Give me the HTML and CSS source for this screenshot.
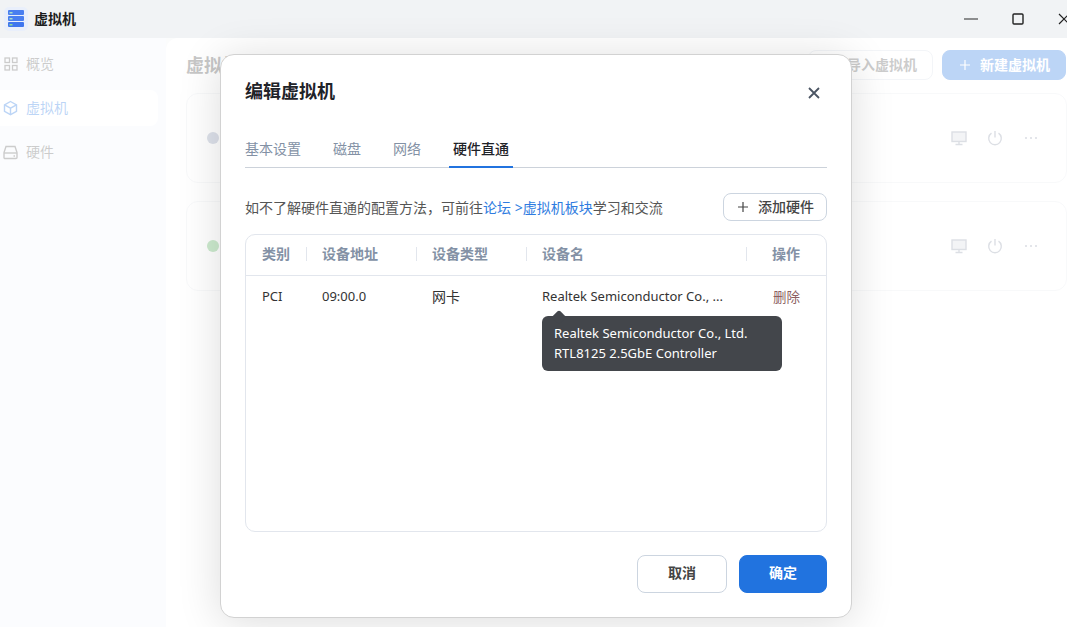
FILE: index.html

```html
<!DOCTYPE html>
<html lang="zh-CN">
<head>
  <meta charset="UTF-8">
  <title>虚拟机</title>
  <link rel="stylesheet" href="styles.css">
</head>
<body>
  <div class="app">
    <header class="titlebar">
      <svg class="logo" width="26" height="28" viewBox="0 0 26 28">
        <rect x="2" y="4" width="24" height="24" rx="5" fill="#e9effb"/>
        <rect x="6" y="7" width="16" height="5" rx="1" fill="#4a7ff0"/>
        <rect x="6" y="13" width="16" height="5" rx="1" fill="#4a7ff0"/>
        <rect x="6" y="19" width="16" height="5" rx="1" fill="#3f76ee"/>
        <rect x="7.500" y="9" width="3" height="1.500" fill="#a8e0c8"/>
        <rect x="7.500" y="15" width="3" height="1.500" fill="#a8e0c8"/>
        <rect x="7.500" y="21" width="3" height="1.500" fill="#8fdc9c"/>
      </svg>
      <span class="app-name">虚拟机</span>
      <div class="win-controls">
        <svg class="win-min" width="14" height="14" viewBox="0 0 14 14"><path d="M0 7h14" stroke="#555" stroke-width="1.300"/></svg>
        <svg class="win-max" width="12" height="12" viewBox="0 0 12 12"><rect x="1" y="1" width="10" height="10" rx="1" fill="none" stroke="#222" stroke-width="1.400"/></svg>
        <svg class="win-close" width="12" height="12" viewBox="0 0 12 12"><path d="M1 1l10 10M11 1L1 11" stroke="#222" stroke-width="1.200"/></svg>
      </div>
    </header>

    <div class="content">
      <aside class="sidebar">
        <div class="nav-item">
          <svg width="16" height="16" viewBox="0 0 16 16" fill="none" stroke="currentColor" stroke-width="1.300"><rect x="3" y="2" width="4.500" height="4.500"/><rect x="10.500" y="2" width="4.500" height="4.500"/><rect x="3" y="9.500" width="4.500" height="4.500"/><rect x="10.500" y="9.500" width="4.500" height="4.500"/></svg>
          <span>概览</span>
        </div>
        <div class="nav-item active">
          <svg width="16" height="16" viewBox="0 0 16 16" fill="none" stroke="currentColor" stroke-width="1.400"><path d="M8.500 1.500l6 3.300v6.600l-6 3.300-6-3.300V4.800z"/><path d="M2.500 4.800l6 3.300 6-3.300M8.500 8.100v6.600"/></svg>
          <span>虚拟机</span>
        </div>
        <div class="nav-item">
          <svg width="16" height="16" viewBox="0 0 16 16" fill="none" stroke="currentColor" stroke-width="1.400"><path d="M4 2.500h9l2 6v5a1 1 0 0 1-1 1H3a1 1 0 0 1-1-1v-5z"/><path d="M2 9h13"/><path d="M11.500 12h1.500"/></svg>
          <span>硬件</span>
        </div>
      </aside>

      <main class="main">
        <div class="page-head">
          <h2>虚拟机</h2>
          <div class="page-actions">
            <button class="page-btn">导入虚拟机</button>
            <button class="page-btn primary">
              <svg class="plus" width="10" height="10" viewBox="0 0 10 10"><path d="M5 0v10M0 5h10" stroke="currentColor" stroke-width="1.200"/></svg>新建虚拟机
            </button>
          </div>
        </div>
        <div class="vm-card">
          <span class="dot"></span>
          <div class="vm-actions">
            <svg width="18" height="18" viewBox="0 0 18 18" fill="none" stroke="currentColor" stroke-width="1.400"><rect x="2" y="3" width="14" height="9.500" fill="currentColor" fill-opacity=".35"/><path d="M9 12.500V15M5.500 15.500h7"/></svg>
            <svg width="18" height="18" viewBox="0 0 18 18" fill="none" stroke="currentColor" stroke-width="1.400"><path d="M5.500 4.200a6.300 6.300 0 1 0 7 0M9 2v6.500"/></svg>
            <svg width="18" height="18" viewBox="0 0 18 18" fill="currentColor"><circle cx="4" cy="9" r="1.100"/><circle cx="9" cy="9" r="1.100"/><circle cx="14" cy="9" r="1.100"/></svg>
          </div>
        </div>
        <div class="vm-card">
          <span class="dot on"></span>
          <div class="vm-actions">
            <svg width="18" height="18" viewBox="0 0 18 18" fill="none" stroke="currentColor" stroke-width="1.400"><rect x="2" y="3" width="14" height="9.500" fill="currentColor" fill-opacity=".35"/><path d="M9 12.500V15M5.500 15.500h7"/></svg>
            <svg width="18" height="18" viewBox="0 0 18 18" fill="none" stroke="currentColor" stroke-width="1.400"><path d="M5.500 4.200a6.300 6.300 0 1 0 7 0M9 2v6.500"/></svg>
            <svg width="18" height="18" viewBox="0 0 18 18" fill="currentColor"><circle cx="4" cy="9" r="1.100"/><circle cx="9" cy="9" r="1.100"/><circle cx="14" cy="9" r="1.100"/></svg>
          </div>
        </div>
      </main>

      <div class="mask"></div>
    </div>

    <section class="modal">
      <div class="modal-head">
        <h1>编辑虚拟机</h1>
        <svg class="modal-close" width="12" height="12" viewBox="0 0 12 12"><path d="M1 1l10 10M11 1L1 11" stroke="#4b5563" stroke-width="1.800"/></svg>
      </div>

      <nav class="tabs">
        <a class="tab">基本设置</a>
        <a class="tab">磁盘</a>
        <a class="tab">网络</a>
        <a class="tab active">硬件直通</a>
      </nav>

      <div class="notice">
        <p>如不了解硬件直通的配置方法，可前往<a class="link">论坛 &gt;虚拟机板块</a>学习和交流</p>
        <button class="add-btn">
          <svg class="plus" width="10" height="10" viewBox="0 0 10 10"><path d="M5 0v10M0 5h10" stroke="currentColor" stroke-width="1.200"/></svg>添加硬件
        </button>
      </div>

      <div class="hw-table">
        <div class="hw-row hw-header">
          <div class="hw-cell">类别</div>
          <div class="hw-cell">设备地址</div>
          <div class="hw-cell">设备类型</div>
          <div class="hw-cell">设备名</div>
          <div class="hw-cell op">操作</div>
        </div>
        <div class="hw-row">
          <div class="hw-cell">PCI</div>
          <div class="hw-cell">09:00.0</div>
          <div class="hw-cell type">网卡</div>
          <div class="hw-cell name">
            <span>Realtek Semiconductor Co., ...</span>
            <div class="tooltip">Realtek Semiconductor Co., Ltd.<br>RTL8125 2.5GbE Controller</div>
          </div>
          <div class="hw-cell op"><a class="del">删除</a></div>
        </div>
      </div>

      <div class="modal-foot">
        <button class="btn">取消</button>
        <button class="btn primary">确定</button>
      </div>
    </section>
  </div>
</body>
</html>
```

FILE: styles.css

```css
* {
  box-sizing: border-box;
}

body {
  margin: 0;
  background: #fff;
  font-family: "Noto Sans", "Noto Sans CJK SC", sans-serif;
  color: #333;
}

h1, h2, p {
  margin: 0;
}

button {
  font-family: inherit;
}

.app {
  position: relative;
  width: 1067px;
  height: 627px;
  overflow: hidden;
  display: flex;
  flex-direction: column;
}

/* title bar */
.titlebar {
  height: 38px;
  flex: none;
  display: flex;
  align-items: center;
  background: #f1f3f5;
}

.logo {
  margin: -4px 0 0 2px;
}

.app-name {
  margin: 0 0 3px 6px;
  font-size: 14px;
  font-weight: 700;
  color: #1c1c1c;
}

.win-controls {
  margin-left: auto;
  display: flex;
  align-items: center;
  margin-right: -3px;
}

.win-min {
  margin-right: 34px;
}

.win-max {
  margin-right: 34px;
}

/* page behind the dialog */
.content {
  position: relative;
  flex: 1;
  display: flex;
  background: #f1f3f5;
}

.sidebar {
  width: 166px;
  flex: none;
  padding-top: 8px;
  background: #f2f5fb;
}

.nav-item {
  width: 158px;
  height: 36px;
  margin-bottom: 8px;
  display: flex;
  align-items: center;
  gap: 8px;
  padding-left: 2px;
  border-radius: 0 8px 8px 0;
  font-size: 14px;
  color: #555;
}

.nav-item span {
  padding-bottom: 2px;
}

.nav-item.active {
  background: #fff;
  color: #2173df;
}

.main {
  flex: 1;
  padding: 12px 0 0 20px;
  background: #fff;
  border-radius: 12px 0 0 0;
}

.page-head {
  height: 30px;
  margin-bottom: 13px;
  display: flex;
  align-items: center;
  justify-content: space-between;
}

.page-head h2 {
  padding-bottom: 3px;
  font-size: 18px;
  font-weight: 700;
  color: #444;
}

.page-actions {
  display: flex;
  gap: 9px;
  margin-right: 1px;
}

.page-btn {
  width: 125px;
  height: 30px;
  padding: 0 15px 2px;
  background: #fff;
  border: 1px solid #d5dce6;
  border-radius: 8px;
  font-size: 14px;
  font-weight: 700;
  text-align: right;
  color: #555;
}

.page-btn.primary {
  width: 124px;
  background: #2173df;
  border-color: #2173df;
  color: #fff;
}

.page-btn .plus {
  margin-right: 10px;
}

.vm-card {
  height: 90px;
  margin: 0 0 18px;
  padding: 0 26px 0 20px;
  display: flex;
  align-items: center;
  justify-content: space-between;
  border: 1px solid #e6e9ee;
  border-radius: 12px;
}

.dot {
  width: 12px;
  height: 12px;
  border-radius: 50%;
  background: #8d9bb9;
}

.dot.on {
  background: #54b85a;
}

.vm-actions {
  display: flex;
  gap: 18px;
  color: #8a93a6;
}

.mask {
  position: absolute;
  inset: 0;
  background: rgba(255, 255, 255, 0.7);
}

/* dialog */
.modal {
  position: absolute;
  left: 220px;
  top: 54px;
  width: 632px;
  height: 564px;
  padding: 24px 24px 0;
  display: flex;
  flex-direction: column;
  background: #fff;
  border: 1px solid #d2d2d2;
  border-radius: 14px;
  box-shadow: 0 4px 44px rgba(0, 0, 0, 0.14);
}

.modal-head {
  height: 26px;
  display: flex;
  align-items: center;
  justify-content: space-between;
}

.modal-head h1 {
  padding-bottom: 4px;
  font-size: 18px;
  font-weight: 700;
  color: #1f2329;
}

.modal-close {
  margin: 1px 7px 0 0;
}

.tabs {
  margin-top: 26px;
  height: 37px;
  display: flex;
  gap: 24px;
  border-bottom: 1px solid #ccd2da;
}

.tab {
  padding: 0 4px;
  height: 37px;
  line-height: 36px;
  font-size: 14px;
  color: #8391a5;
}

.tab:first-child {
  margin-left: -4px;
}

.tab.active {
  color: #1f2329;
  font-weight: 500;
  border-bottom: 2px solid #2173df;
}

.notice {
  margin-top: 25px;
  height: 28px;
  display: flex;
  align-items: center;
  justify-content: space-between;
  font-size: 14px;
  color: #555;
}

.notice p {
  padding-bottom: 1px;
}

.link {
  color: #2f7ce0;
}

.add-btn {
  width: 104px;
  height: 28px;
  padding: 0 0 2px 2px;
  background: #fff;
  border: 1px solid #ccd5e0;
  border-radius: 8px;
  font-size: 14px;
  font-weight: 500;
  color: #444;
}

.add-btn .plus {
  margin-right: 10px;
}

.hw-table {
  margin-top: 13px;
  height: 298px;
  border: 1px solid #e2e6ed;
  border-radius: 10px;
}

.hw-row {
  display: grid;
  grid-template-columns: 60px 110px 110px 220px 1fr;
  height: 40px;
  align-items: center;
  font-size: 13px;
  color: #333;
}

.hw-row.hw-header {
  height: 41px;
  padding-bottom: 4px;
  border-bottom: 1px solid #e2e6ed;
  font-size: 14px;
  font-weight: 700;
  color: #8391a5;
}

.hw-cell {
  position: relative;
  padding-left: 16px;
  min-width: 0;
}

.hw-cell.type,
.hw-cell.op {
  font-size: 14px;
}

.hw-header .hw-cell + .hw-cell::before {
  content: "";
  position: absolute;
  left: 0;
  top: 4px;
  height: 14px;
  border-left: 1px solid #e2e6ed;
}

.hw-cell.op {
  padding-left: 26px;
}

.del {
  margin-left: 1px;
  font-size: 13.500px;
  color: #8c5f63;
}

.tooltip {
  position: absolute;
  left: 16px;
  top: 29px;
  width: 240px;
  height: 55px;
  padding: 7px 12px;
  background: #43464b;
  border-radius: 6px;
  font-size: 13px;
  line-height: 20px;
  color: #fff;
}

.tooltip::before {
  content: "";
  position: absolute;
  left: 12px;
  top: -4px;
  width: 10px;
  height: 10px;
  background: #43464b;
  border-radius: 2px;
  transform: rotate(45deg);
}

.modal-foot {
  margin-top: 23px;
  display: flex;
  justify-content: flex-end;
  gap: 12px;
}

.btn {
  width: 90px;
  height: 38px;
  padding: 0 0 4px;
  background: #fff;
  border: 1px solid #ccd5e0;
  border-radius: 8px;
  font-size: 14px;
  font-weight: 700;
  color: #444;
}

.btn.primary {
  width: 88px;
  background: #2173df;
  border-color: #2173df;
  color: #fff;
}
```
